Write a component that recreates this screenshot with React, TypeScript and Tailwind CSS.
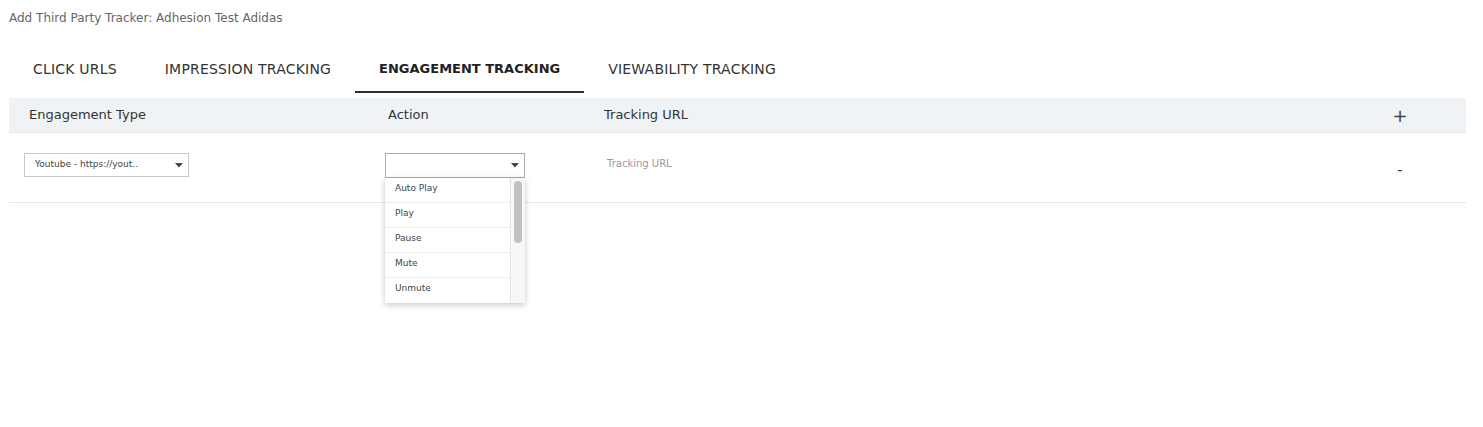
const tabs = ["CLICK URLS", "IMPRESSION TRACKING", "ENGAGEMENT TRACKING", "VIEWABILITY TRACKING"];
const actions = ["Auto Play", "Play", "Pause", "Mute", "Unmute"];

const Caret = () => (
  <svg width="8" height="5" viewBox="0 0 8 5" className="shrink-0">
    <path d="M0 0 L8 0 L4 4.5 Z" fill="#34495e" />
  </svg>
);

const App = () => {
  return (
    <div className="w-[1483px] h-[427px] bg-white text-[#333] font-['DejaVu_Sans',sans-serif]">
      <div className="pl-[9px] pt-[11px] text-[12px] leading-[14px] text-[#666]">
        Add Third Party Tracker: Adhesion Test Adidas
      </div>

      <div className="flex pl-[9px] mt-[31px]">
        {tabs.map((t) => {
          const active = t === "ENGAGEMENT TRACKING";
          return (
            <div
              key={t}
              className={
                active
                  ? "px-6 h-[37px] pt-[3px] text-[13px] font-bold text-[#222] border-b-2 border-[#2b2f33]"
                  : "px-6 h-[37px] pt-[3px] text-[14px] leading-[20px] tracking-[0.2px] text-[#333]"
              }
            >
              {t}
            </div>
          );
        })}
      </div>

      <div className="ml-[9px] mt-[5px] w-[1457px]">
        <div className="grid grid-cols-[364px_216px_1fr_132px] h-[35px] bg-[#f0f3f6] border-b border-[#e3e6e9] items-center text-[13px]">
          <div className="pl-5">Engagement Type</div>
          <div className="pl-[15px]">Action</div>
          <div className="pl-[15px]">Tracking URL</div>
          <div className="text-center text-[18px] text-[#444]">+</div>
        </div>

        <div className="grid grid-cols-[364px_216px_1fr_132px] h-[70px] border-b border-[#e5e7ea]">
          <div className="pl-[15px] pt-[20px]">
            <div className="w-[165px] h-[24px] border border-[#c8c8c8] flex items-center justify-between pl-[10px] pr-[5px] text-[9px] text-[#444]">
              <span>Youtube - https://yout..</span>
              <Caret />
            </div>
          </div>

          <div className="pl-3 pt-[20px] relative">
            <div className="w-[140px] h-[25px] border border-[#aaa] flex items-center justify-end pr-[5px]">
              <Caret />
            </div>
            <div className="absolute left-3 top-[45px] w-[140px] h-[125px] bg-white shadow-[0_2px_6px_rgba(0,0,0,0.22)] flex z-10">
              <div className="flex-1">
                {actions.map((a) => (
                  <div
                    key={a}
                    className="h-[25px] pl-[10px] pt-[4px] text-[9px] leading-[12px] text-[#444] border-b border-[#eee] last:border-b-0"
                  >
                    {a}
                  </div>
                ))}
              </div>
              <div className="w-[15px] bg-[#f7f7f7] border-l border-[#e6e6e6] pt-[3px] flex justify-center">
                <div className="w-[8px] h-[62px] rounded-full bg-[#c1c1c1]" />
              </div>
            </div>
          </div>

          <div className="pl-[18px] pt-[23px] text-[10px] text-[#999]">Tracking URL</div>

          <div className="text-center pt-[28px] text-[16px] leading-[18px] text-[#444]">-</div>
        </div>
      </div>
    </div>
  );
};

export default App;
